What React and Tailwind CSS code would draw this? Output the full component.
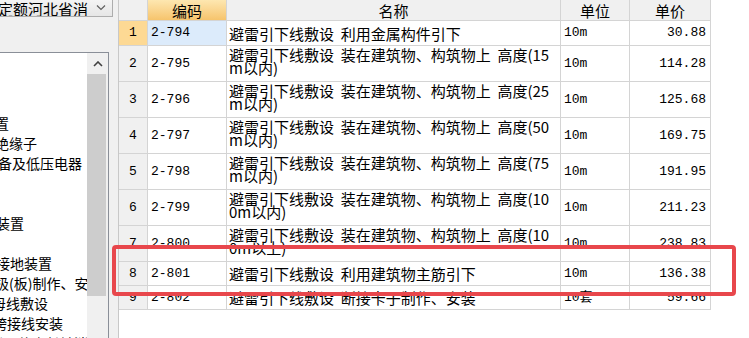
import React from 'react';

// quota rows shown in the right grid
const ROWS = [
  { n: 1, code: '2-794', name: ['避雷引下线敷设  利用金属构件引下'], unit: '10m', price: '30.88', h: 'h-[25px]' },
  { n: 2, code: '2-795', name: ['避雷引下线敷设  装在建筑物、构筑物上  高度(15', 'm以内)'], unit: '10m', price: '114.28', h: 'h-[36px]' },
  { n: 3, code: '2-796', name: ['避雷引下线敷设  装在建筑物、构筑物上  高度(25', 'm以内)'], unit: '10m', price: '125.68', h: 'h-[36px]' },
  { n: 4, code: '2-797', name: ['避雷引下线敷设  装在建筑物、构筑物上  高度(50', 'm以内)'], unit: '10m', price: '169.75', h: 'h-[36px]' },
  { n: 5, code: '2-798', name: ['避雷引下线敷设  装在建筑物、构筑物上  高度(75', 'm以内)'], unit: '10m', price: '191.95', h: 'h-[36px]' },
  { n: 6, code: '2-799', name: ['避雷引下线敷设  装在建筑物、构筑物上  高度(10', '0m以内)'], unit: '10m', price: '211.23', h: 'h-[36px]' },
  { n: 7, code: '2-800', name: ['避雷引下线敷设  装在建筑物、构筑物上  高度(10', '0m以上)'], unit: '10m', price: '238.83', h: 'h-[36px]' },
  { n: 8, code: '2-801', name: ['避雷引下线敷设  利用建筑物主筋引下'], unit: '10m', price: '136.38', h: 'h-[24px]' },
  { n: 9, code: '2-802', name: ['避雷引下线敷设  断接卡子制作、安装'], unit: '10套', price: '59.66', h: 'h-[24px]' },
];

// tree items, most of the text is scrolled off to the left
const TREE = [
  { text: '避雷针制作安装', ml: '-ml-[101px]' },
  { text: '避雷针拉线安装', ml: '-ml-[101px]' },
  { text: '', ml: '' },
  { text: '消雷装置', ml: '-ml-[47px]' },
  { text: '拉线绝缘子', ml: '-ml-[33px]' },
  { text: '设备及低压电器', ml: '-ml-[16px]' },
  { text: '', ml: '' },
  { text: '', ml: '' },
  { text: '避雷装置', ml: '-ml-[32px]' },
  { text: '', ml: '' },
  { text: '独立接地装置', ml: '-ml-[32px]' },
  { text: '接地极(板)制作、安装', ml: '-ml-[33px]' },
  { text: '接地母线敷设', ml: '-ml-[36px]' },
  { text: '接地跨接线安装', ml: '-ml-[35px]' },
  { text: '半导体少长针消雷装置', ml: '-ml-[10px]' },
];

const cell = 'border-r border-b border-[#d4d4d4]';
const mono = "font-['Liberation_Mono','Noto_Sans_CJK_SC',monospace] text-[13px]";

function Sidebar() {
  return (
    <aside className="w-[119px] shrink-0 h-full flex flex-col bg-[#f0f0f0] border-r border-[#c8c8c8]">
      <div className="h-[17px] w-[113px] flex items-center bg-linear-to-b from-[#f4f4f4] to-[#e6e6e6] border-r border-b border-[#adadad]">
        <span className="flex-1 -ml-[2px] whitespace-nowrap overflow-hidden text-[15px] leading-[15px] text-black">定额河北省消</span>
        <svg width="22" height="17" viewBox="0 0 22 17" className="shrink-0">
          <path d="M7 5.5 L11 9.5 L15 5.5" fill="none" stroke="#606060" strokeWidth="1.2" />
        </svg>
      </div>
      <div className="mt-[35px] w-[109px] flex-1 flex bg-white border-t border-r border-[#8a8f98] overflow-hidden">
        <div className="w-[87px] shrink-0 overflow-hidden">
          {TREE.map((t, i) => (
            <div key={i} className={`h-[20px] leading-[20px] whitespace-nowrap text-[14px] text-black ${t.ml}`}>
              {t.text}
            </div>
          ))}
        </div>
        <div className="w-[21px] flex flex-col bg-[#f0f0f0]">
          <div className="h-[21px] flex items-center justify-center">
            <svg width="10" height="6" viewBox="0 0 10 6">
              <path d="M1 5 L5 1 L9 5" fill="none" stroke="#404040" strokeWidth="1.6" />
            </svg>
          </div>
          <div className="h-[222px] mr-[2px] bg-[#cdcdcd]" />
        </div>
      </div>
    </aside>
  );
}

function Row({ r }) {
  const first = r.n === 1;
  const multi = r.name.length > 1;
  return (
    <div className={`grid grid-cols-[29px_79px_334px_69px_81px] ${r.h}`}>
      <div className={`${cell} ${first ? 'bg-[#fdd994]' : 'bg-[#f0f0f0]'} flex items-center justify-center ${mono}`}>{r.n}</div>
      <div className={`${cell} ${first ? 'bg-[#dcebfb]' : 'bg-white'} flex items-center pl-[3px] ${mono}`}>{r.code}</div>
      <div className={`${cell} bg-white flex flex-col pl-[2px] overflow-hidden text-[15px] leading-[13px] ${multi ? 'justify-start pt-[2px]' : 'justify-center'}`}>
        {r.name.map((line, i) => (
          <span key={i} className="whitespace-pre">{line}</span>
        ))}
      </div>
      <div className={`${cell} bg-white flex items-center pl-[3px] ${mono}`}>{r.unit}</div>
      <div className={`${cell} bg-white flex items-center justify-end pr-[4px] ${mono}`}>{r.price}</div>
    </div>
  );
}

export default function App() {
  return (
    <div className="relative w-[749px] h-[338px] overflow-hidden bg-white flex text-black font-['Noto_Sans_CJK_SC',sans-serif]">
      <Sidebar />
      <main className="flex-1 flex flex-col">
        <div className="grid grid-cols-[29px_79px_334px_69px_81px] h-[21px] text-[15px] leading-[15px]">
          <div className={`${cell} bg-[#f0f0f0]`} />
          <div className={`${cell} bg-linear-to-b from-[#fde7b0] to-[#f6c46c] flex items-center justify-center`}>编码</div>
          <div className={`${cell} bg-[#f0f0f0] flex items-center justify-center`}>名称</div>
          <div className={`${cell} bg-[#f0f0f0] flex items-center justify-center`}>单位</div>
          <div className={`${cell} bg-[#f0f0f0] flex items-center justify-center`}>单价</div>
        </div>
        {ROWS.map(r => (
          <Row key={r.n} r={r} />
        ))}
      </main>
      <div className="absolute left-[112px] top-[245px] w-[624px] h-[51px] border-4 border-[#e8474c] rounded-[4px]" />
    </div>
  );
}
